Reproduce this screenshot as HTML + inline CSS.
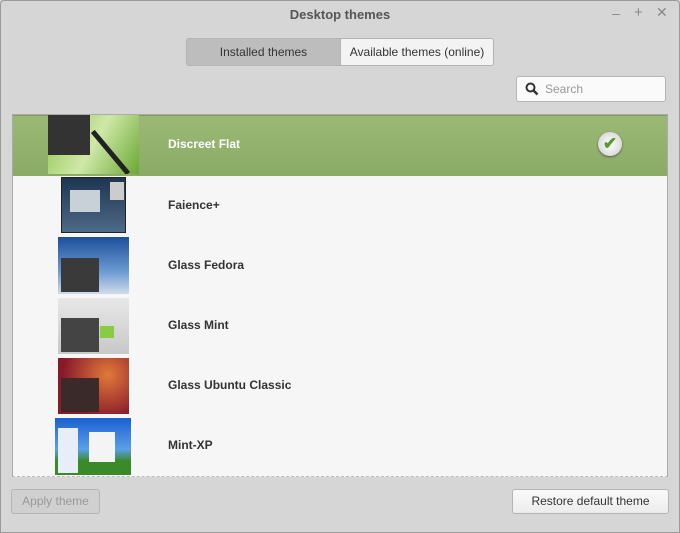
<!DOCTYPE html>
<html><head><style>
body{margin:0;width:680px;height:533px;overflow:hidden;background:#d6d6d6;font-family:"Liberation Sans",sans-serif;position:relative}
.a{position:absolute}
.t{font-size:13px;color:#555;font-weight:bold}
.btn{position:absolute;border:1px solid #b4b4b4;border-radius:3px;font-size:12px;text-align:center;box-sizing:border-box}
.name{position:absolute;left:168px;font-size:12px;font-weight:bold;color:#333}
.th{position:absolute;overflow:hidden}
</style></head><body>
<div class="a" style="left:0;top:0;width:680px;height:533px;border:1px solid #9a9a9a;box-sizing:border-box;border-radius:4px 4px 0 0"></div>
<div class="a t" style="left:0;width:680px;top:7px;text-align:center">Desktop themes</div>
<div class="a" style="left:612px;top:5px;color:#888;font-size:14px">–</div>
<div class="a" style="left:634px;top:4px;color:#888;font-size:15px">+</div>
<div class="a" style="left:656px;top:4px;color:#888;font-size:14px">✕</div>
<div class="btn" style="left:186px;top:38px;width:155px;height:28px;line-height:26px;background:#bdbdbd;color:#333;border-radius:3px 0 0 3px">Installed themes</div>
<div class="btn" style="left:340px;top:38px;width:154px;height:28px;line-height:26px;background:#f3f3f3;color:#333;border-radius:0 3px 3px 0">Available themes (online)</div>
<div class="btn" style="left:516px;top:76px;width:150px;height:26px;background:#fafafa;text-align:left">
<svg class="a" style="left:8px;top:5px" width="14" height="14"><circle cx="5.5" cy="5.5" r="4" fill="none" stroke="#333" stroke-width="2"/><path d="M8.5 8.5L12.5 12.5" stroke="#333" stroke-width="2.5"/></svg>
<span class="a" style="left:28px;top:5px;color:#999;font-size:12px">Search</span></div>
<div class="a" style="left:12px;top:114px;width:656px;height:363px;background:#f6f6f6;border:1px solid #aaa;box-sizing:border-box;border-bottom:1px dashed #bbb;overflow:hidden">
<div class="a" style="left:0;top:0;width:656px;height:61px;background:linear-gradient(#9ab975,#8aab66);border-top:1px solid #7c9a5a;box-sizing:border-box"></div>
</div>
<div class="th" style="left:48px;top:115px;width:91px;height:59px;background:linear-gradient(120deg,#8fc34a,#cfe8a8 50%,#6aa833)"><div class="a" style="left:0;top:0;width:42px;height:40px;background:#333"></div><div class="a" style="left:60px;top:10px;width:5px;height:55px;background:#222;transform:rotate(-40deg)"></div></div>
<div class="name" style="top:137px;color:#fff">Discreet Flat</div>
<div class="a" style="left:598px;top:132px;width:24px;height:24px;border-radius:50%;background:radial-gradient(#fff,#ccc);box-shadow:0 1px 2px #555;text-align:center;line-height:24px;color:#5a9a2a;font-size:17px;font-weight:bold">✔</div>
<div class="th" style="left:61px;top:177px;width:65px;height:56px;background:linear-gradient(#1e3550,#4d6a88);border:1px solid #222;box-sizing:border-box"><div class="a" style="left:8px;top:12px;width:30px;height:22px;background:#c8d0d8"></div><div class="a" style="left:48px;top:4px;width:14px;height:18px;background:#ccc"></div></div>
<div class="name" style="top:198px">Faience+</div>
<div class="th" style="left:58px;top:237px;width:71px;height:57px;background:linear-gradient(#1d4f9c,#6a9ad0 60%,#d0dcea)"><div class="a" style="left:3px;top:21px;width:38px;height:34px;background:#3a3a3a"></div></div>
<div class="name" style="top:258px">Glass Fedora</div>
<div class="th" style="left:58px;top:298px;width:71px;height:56px;background:linear-gradient(#e8e8e8,#c8c8c8)"><div class="a" style="left:3px;top:20px;width:38px;height:34px;background:#444"></div><div class="a" style="left:42px;top:28px;width:14px;height:12px;background:#8c4"></div></div>
<div class="name" style="top:318px">Glass Mint</div>
<div class="th" style="left:58px;top:358px;width:71px;height:56px;background:radial-gradient(circle at 70% 30%,#e07a3a,#8a1a2a 70%)"><div class="a" style="left:3px;top:20px;width:38px;height:34px;background:#3a2a2a"></div></div>
<div class="name" style="top:378px">Glass Ubuntu Classic</div>
<div class="th" style="left:55px;top:418px;width:76px;height:57px;background:linear-gradient(#1a60d0,#5aa0e8 55%,#3a8a2a 75%)"><div class="a" style="left:3px;top:10px;width:20px;height:45px;background:#e8eef8"></div><div class="a" style="left:34px;top:14px;width:26px;height:30px;background:#f4f4f4"></div></div>
<div class="name" style="top:438px">Mint-XP</div>
<div class="btn" style="left:11px;top:489px;width:89px;height:25px;line-height:23px;background:#d0d0d0;color:#999">Apply theme</div>
<div class="btn" style="left:512px;top:489px;width:157px;height:25px;line-height:23px;background:linear-gradient(#fafafa,#ececec);color:#333">Restore default theme</div>
</body></html>
